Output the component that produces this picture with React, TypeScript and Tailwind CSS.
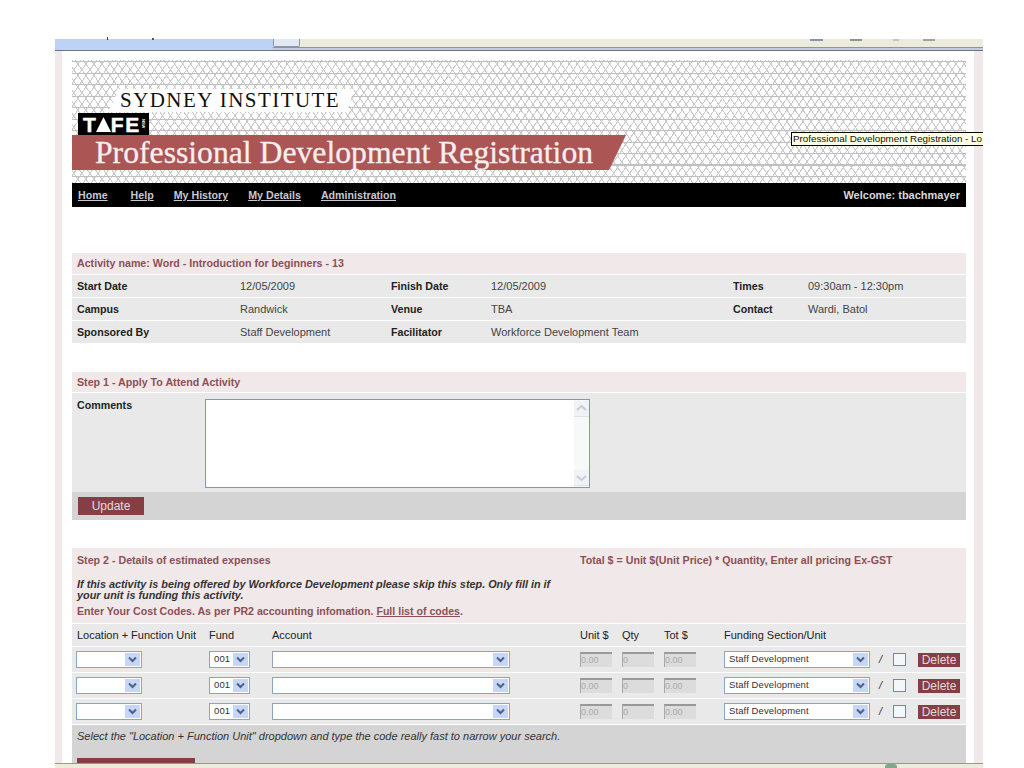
const infoRows = [
  ["Start Date", "12/05/2009", "Finish Date", "12/05/2009", "Times", "09:30am - 12:30pm"],
  ["Campus", "Randwick", "Venue", "TBA", "Contact", "Wardi, Batol"],
  ["Sponsored By", "Staff Development", "Facilitator", "Workforce Development Team", "", ""],
];

function Chevron() {
  return (
    <span className="flex h-full w-[15px] shrink-0 items-center justify-center bg-[#c5d6f7]">
      <svg width="9" height="7" viewBox="0 0 9 7">
        <path d="M1 1.5 L4.5 5 L8 1.5" fill="none" stroke="#4d6185" strokeWidth="2" />
      </svg>
    </span>
  );
}

function Select({ width, value }: { width: string; value?: string }) {
  return (
    <div className={`${width} flex h-[17px] shrink-0 items-center justify-between border border-[#8ea3be] bg-white py-px pr-px pl-[4px] text-[9.5px] tracking-[0.1px] text-[#333]`}>
      <span>{value}</span>
      <Chevron />
    </div>
  );
}

function Disabled({ width, value }: { width: string; value: string }) {
  return (
    <div className={`${width} h-[15px] shrink-0 border-t-2 border-l border-t-[#999] border-l-[#aaa] bg-[#dcdcdc] text-[9px] leading-[13px] text-[#aaa]`}>
      {value}
    </div>
  );
}

function ExpenseRow() {
  return (
    <div className="mb-px flex h-[25px] items-center bg-[#e9e9ea] pl-[4px]">
      <Select width="w-[66px]" />
      <div className="w-[67px] shrink-0" />
      <Select width="w-[41px]" value="001" />
      <div className="w-[22px] shrink-0" />
      <Select width="w-[238px]" />
      <div className="w-[70px] shrink-0" />
      <Disabled width="w-[32px]" value="0.00" />
      <div className="w-[10px] shrink-0" />
      <Disabled width="w-[32px]" value="0" />
      <div className="w-[10px] shrink-0" />
      <Disabled width="w-[32px]" value="0.00" />
      <div className="w-[28px] shrink-0" />
      <Select width="w-[146px]" value="Staff Development" />
      <span className="ml-[9px] w-[14px] shrink-0 text-[11px] italic text-[#333]">/</span>
      <div className="h-[13px] w-[13px] shrink-0 border border-[#6f8aa8] bg-[#f4f7fa]" />
      <div className="ml-[12px] h-[14px] w-[42px] shrink-0 bg-[#843f45] text-center text-[12px] leading-[14px] text-[#e6d6d8]">
        Delete
      </div>
    </div>
  );
}

export default function App() {
  return (
    <div className="flex h-[768px] w-[1024px] flex-col overflow-hidden bg-white font-['Liberation_Sans',Arial,sans-serif]">
      <div className="h-[39px] shrink-0" />

      {/* browser tab strip */}
      <div className="relative ml-[55px] flex h-[12px] w-[928px] shrink-0 border-b border-b-[#6e7480]">
        <div className="h-[11px] w-[218px] bg-[#bdd3f6]" />
        <div className="flex flex-1 flex-col">
          <div className="flex h-[8px] bg-[#ecebdc]">
            <div className="h-[8px] w-[27px] rounded-b-[2px] border-x border-b border-[#8c94a8] bg-[#e4e8f4]" />
          </div>
          <div className="h-[3px] border-t border-t-[#8c94a8] bg-[#c3cbe0]" />
        </div>
        <div className="absolute -top-[2px] left-[52px] h-[3px] w-px bg-[#333]" />
        <div className="absolute -top-[1px] left-[97px] h-[2px] w-[2px] bg-[#555]" />
        <div className="absolute top-0 left-[755px] h-[2px] w-[13px] bg-[#8a93a3]" />
        <div className="absolute top-0 left-[795px] h-[2px] w-[12px] bg-[#8f9488]" />
        <div className="absolute top-0 left-[838px] h-[2px] w-[6px] bg-[#c4c4b8]" />
        <div className="absolute top-0 left-[868px] h-[2px] w-[12px] bg-[#a3a397]" />
      </div>

      <div className="ml-[55px] flex min-h-0 w-[928px] flex-1 bg-[#f1e8e9] pr-[9px] pl-[7px]">
        <div className="relative w-[912px] bg-white pt-[9px] pl-[10px]">
          {/* banner */}
          <div className="w-[894px] bg-[repeating-linear-gradient(180deg,transparent_0,transparent_1px,#c0c0c0_1px,#c0c0c0_2px,transparent_2px,transparent_11.5px),repeating-linear-gradient(55deg,#c8c8c8_0,#c8c8c8_0.7px,transparent_1.2px,transparent_6.6px),repeating-linear-gradient(125deg,#c8c8c8_0,#c8c8c8_0.7px,transparent_1.2px,transparent_6.6px)] pt-[29px] pb-[13px]">
            <div className="ml-[36px] flex h-[23px] w-[246px] items-center bg-white pl-[12px] font-['Liberation_Serif',serif] text-[21px] tracking-[1.45px] whitespace-nowrap text-[#111] [clip-path:polygon(11px_0,100%_0,calc(100%-7px)_100%,0_100%)]">
              SYDNEY INSTITUTE
            </div>
            <div className="mt-px ml-[6px] flex h-[22px] w-[71px] items-center bg-black pl-[5px] text-[21px] leading-none font-bold text-white [-webkit-text-stroke:0.5px_white]">
              <span>T</span>
              <svg width="15" height="15" viewBox="0 0 15 15">
                <path d="M7.5 0 L15 15 L0 15 Z" fill="#fff" />
              </svg>
              <span className="tracking-[1.5px]">FE</span>
              <span className="text-[4px] [-webkit-text-stroke:0] [writing-mode:vertical-rl]">NSW</span>
            </div>
            <div className="flex h-[35px] w-[554px] items-center bg-[#ab5555] pl-[23px] font-['Liberation_Serif',serif] text-[31.7px] leading-none whitespace-nowrap text-[#f7eeee] [-webkit-text-stroke:0.3px_#f7eeee] [clip-path:polygon(0_0,100%_0,calc(100%-17px)_100%,0_100%)]">
              Professional Development Registration
            </div>
          </div>

          {/* nav */}
          <div className="flex h-[24px] w-[894px] items-center justify-between bg-black pr-[6px] pl-[6px] text-[10.67px] font-bold text-[#c6c8d2]">
            <div className="flex">
              <span className="mr-[23px] underline">Home</span>
              <span className="mr-[20px] underline">Help</span>
              <span className="mr-[20px] underline">My History</span>
              <span className="mr-[20px] underline">My Details</span>
              <span className="underline">Administration</span>
            </div>
            <span className="text-[11px] text-[#d8d8d8]">Welcome: tbachmayer</span>
          </div>

          {/* activity */}
          <div className="mt-[46px] w-[894px]">
            <div className="flex h-[21px] items-center bg-[#f1e8e9] pb-px pl-[5px] text-[10.67px] font-bold text-[#8b5057]">
              Activity name: Word - Introduction for beginners - 13
            </div>
            {infoRows.map((row) => (
              <div key={row[0]} className="mt-px flex h-[22px] items-center bg-[#e9e9ea] pl-[5px] text-[11px] text-[#444]">
                <span className="w-[163px] text-[10.67px] font-bold text-[#222]">{row[0]}</span>
                <span className="w-[151px]">{row[1]}</span>
                <span className="w-[100px] text-[10.67px] font-bold text-[#222]">{row[2]}</span>
                <span className="w-[242px]">{row[3]}</span>
                <span className="w-[75px] text-[10.67px] font-bold text-[#222]">{row[4]}</span>
                <span>{row[5]}</span>
              </div>
            ))}
          </div>

          {/* step 1 */}
          <div className="mt-[29px] w-[894px]">
            <div className="flex h-[20px] items-center bg-[#f1e8e9] pl-[5px] text-[10.67px] font-bold text-[#8b5057]">
              Step 1 - Apply To Attend Activity
            </div>
            <div className="mt-px flex h-[99px] bg-[#e9e9ea] pt-[6px] pl-[5px]">
              <span className="w-[128px] text-[10.67px] leading-[12px] font-bold text-[#222]">Comments</span>
              <div className="flex h-[89px] w-[385px] justify-end border border-[#8397ad] bg-white">
                <div className="flex w-[15px] flex-col justify-between bg-[#f7f8f8] py-[1px] text-center">
                  <div className="flex h-[16px] items-center border-b border-b-[#dfe3e7] bg-[#f0f2f4]">
                    <svg width="15" height="9" viewBox="0 0 15 9">
                      <path d="M3 6 L7.5 2 L12 6" fill="none" stroke="#c6ccd2" strokeWidth="2" />
                    </svg>
                  </div>
                  <div className="flex h-[16px] items-center border-b border-b-[#dfe3e7] bg-[#f0f2f4]">
                    <svg width="15" height="9" viewBox="0 0 15 9">
                      <path d="M3 3 L7.5 7 L12 3" fill="none" stroke="#c6ccd2" strokeWidth="2" />
                    </svg>
                  </div>
                </div>
              </div>
            </div>
            <div className="flex h-[28px] items-center bg-[#d4d4d4] pl-[6px]">
              <div className="h-[18px] w-[66px] bg-[#843f45] text-center text-[12px] leading-[18px] text-[#e8d8da]">
                Update
              </div>
            </div>
          </div>

          {/* step 2 */}
          <div className="mt-[28px] w-[894px]">
            <div className="h-[75px] bg-[#f1e8e9] px-[5px] pt-[4px] text-[#8b5057]">
              <div className="flex text-[10.67px] font-bold">
                <span className="w-[503px]">Step 2 - Details of estimated expenses</span>
                <span>Total $ = Unit $(Unit Price) * Quantity, Enter all pricing Ex-GST</span>
              </div>
              <div className="mt-[11px] w-[480px] text-[10.85px] leading-[11px] font-bold text-[#333] italic">
                If this activity is being offered by Workforce Development please skip this step. Only fill in if your unit is funding this activity.
              </div>
              <div className="mt-[3px] text-[10.6px] leading-[15px] font-bold">
                Enter Your Cost Codes. As per PR2 accounting infomation. <span className="underline">Full list of codes</span>.
              </div>
            </div>
            <div className="mt-px flex h-[22px] items-center bg-[#e9e9ea] pl-[5px] text-[11px] text-[#222]">
              <span className="w-[132px]">Location + Function Unit</span>
              <span className="w-[63px]">Fund</span>
              <span className="w-[308px]">Account</span>
              <span className="w-[42px]">Unit $</span>
              <span className="w-[42px]">Qty</span>
              <span className="w-[60px]">Tot $</span>
              <span>Funding Section/Unit</span>
            </div>
            <div className="mt-px">
              <ExpenseRow />
              <ExpenseRow />
              <ExpenseRow />
            </div>
            <div className="h-[46px] bg-[#d4d4d4] pt-[4px] pl-[5px] text-[11px] leading-[15px] text-[#333] italic">
              Select the "Location + Function Unit" dropdown and type the code really fast to narrow your search.
              <div className="mt-[14px] h-[6px] w-[118px] bg-[#843f45]" />
            </div>
          </div>

          {/* tooltip */}
          <div className="absolute top-[81px] left-[729px] h-[14px] w-[192px] border border-r-0 border-black bg-[#ffffe1] pl-[1px] text-[9.8px] leading-[12px] whitespace-nowrap text-[#111]">
            Professional Development Registration - Lo
          </div>
        </div>
      </div>

      {/* status bar */}
      <div className="relative ml-[55px] h-[5px] w-[928px] shrink-0 border-t border-t-[#9a9a88] bg-[#ecebdc]">
        <div className="absolute top-0 left-[830px] h-[4px] w-[12px] rounded-t-[3px] bg-[#7fa98f]" />
      </div>
    </div>
  );
}
